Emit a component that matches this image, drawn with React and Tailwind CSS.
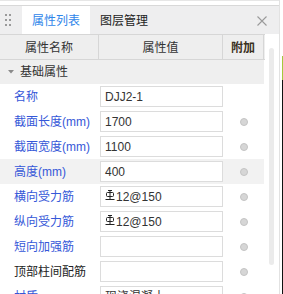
import React from "react";

const rows = [
  { label: "名称", value: "DJJ2-1", dot: false },
  { label: "截面长度(mm)", value: "1700", dot: true },
  { label: "截面宽度(mm)", value: "1100", dot: true },
  { label: "高度(mm)", value: "400", dot: true, hl: true },
  { label: "横向受力筋", value: "12@150", rebar: true, dot: true },
  { label: "纵向受力筋", value: "12@150", rebar: true, dot: true },
  { label: "短向加强筋", value: "", dot: true },
  { label: "顶部柱间配筋", value: "", dot: true, dark: true },
  { label: "材质", value: "现浇混凝土", dot: true },
];

function RebarMark() {
  return (
    <svg width="10" height="11" viewBox="0 0 10 11" className="mr-[1px] -mt-[3px] shrink-0">
      <g stroke="#222" strokeWidth="1" fill="none">
        <line x1="5" y1="0.5" x2="5" y2="9" />
        <rect x="1.5" y="2.5" width="7" height="4" rx="1" />
        <line x1="0.5" y1="9.5" x2="9.5" y2="9.5" />
        <line x1="3" y1="0.5" x2="7" y2="0.5" />
      </g>
    </svg>
  );
}

export default function App() {
  return (
    <div
      className="flex w-[283px] h-[294px] overflow-hidden bg-white text-[12px] text-[#333]"
      style={{ fontFamily: '"Liberation Sans", "Noto Sans CJK SC", sans-serif' }}
    >
      <div className="flex flex-col w-[280px] shrink-0 border-r border-[#e2e2e2]">
        <div className="h-[1px] shrink-0 bg-[#e6e6e6]" />
        <div className="h-[4px] shrink-0 bg-white border-b border-[#d8d8d8] box-content" />

        {/* tabs */}
        <div className="flex items-stretch h-[28px] shrink-0 bg-[#eeeeef]">
          <div className="flex flex-col justify-center gap-[3px] pl-[5px] w-[22px]">
            {[0, 1, 2].map((i) => (
              <div key={i} className="flex gap-[2px]">
                <span className="w-[2px] h-[2px] bg-[#9a9a9a]" />
                <span className="w-[2px] h-[2px] bg-[#9a9a9a]" />
              </div>
            ))}
          </div>
          <div className="flex items-center justify-center w-[68px] pt-[2px] bg-white text-[#2f86ea]">
            属性列表
          </div>
          <div className="flex items-center pl-[10px] pt-[2px] text-[#222]">图层管理</div>
          <div className="flex-1" />
          <div className="flex items-center pr-[12px] pt-[2px]">
            <svg width="10" height="10" viewBox="0 0 10 10">
              <path d="M0.5 0.5 L9.5 9.5 M9.5 0.5 L0.5 9.5" stroke="#9a9a9a" strokeWidth="1.1" />
            </svg>
          </div>
        </div>

        <div className="flex shrink-0">
          {/* table */}
          <div className="w-[265px] flex flex-col">
            <div className="flex h-[26px] shrink-0 bg-[#eeeeee] border-t border-b border-[#d6d6d6] text-[#333]">
              <div className="w-[99px] flex items-center justify-center pt-[2px] border-r border-[#d6d6d6]">
                属性名称
              </div>
              <div className="w-[124px] flex items-center justify-center pt-[2px] border-r border-[#d6d6d6]">
                属性值
              </div>
              <div className="w-[41px] flex items-center justify-center pt-[2px] border-r border-[#d6d6d6] font-semibold text-[#3a3020]">
                附加
              </div>
            </div>

            <div className="flex items-center h-[24px] shrink-0 w-[264px] bg-[#efefef]">
              <svg width="6" height="4" viewBox="0 0 6 4" className="ml-[8px] mr-[6px]">
                <path d="M0 0 L6 0 L3 3.5 Z" fill="#8a8a8a" />
              </svg>
              <span>基础属性</span>
            </div>

            {rows.map((r) => (
              <div
                key={r.label}
                className={`flex items-center h-[25px] w-[264px] shrink-0 ${r.hl ? "bg-[#f2f2f2]" : ""}`}
              >
                <div
                  className={`w-[100px] pl-[14px] whitespace-nowrap ${r.dark ? "text-[#222]" : "text-[#3557d8]"}`}
                >
                  {r.label}
                </div>
                <div className="flex items-center w-[123px] h-[21px] bg-white border border-[#dcdcdc] pl-[4px] text-[#333] whitespace-nowrap overflow-hidden">
                  {r.rebar && <RebarMark />}
                  {r.value}
                </div>
                <div className="flex-1 flex items-center justify-center">
                  {r.dot && (
                    <span className="w-[8px] h-[8px] rounded-full bg-[#d6d6d6] border border-[#c4c4c4]" />
                  )}
                </div>
              </div>
            ))}
          </div>

          {/* scrollbar */}
          <div className="pl-[4px] pt-[14px]">
            <div className="w-[5px] h-[217px] rounded-full bg-[#ebebeb]" />
          </div>
        </div>
      </div>

      <div className="flex flex-col w-[3px]">
        <div className="h-[56px] shrink-0 bg-white" />
        <div className="h-[24px] shrink-0 flex justify-end">
          <span className="w-[1px] bg-[#a4c83c]" />
        </div>
        <div className="flex-1 flex justify-end">
          <span className="w-[1px] bg-[#111]" />
        </div>
      </div>
    </div>
  );
}
